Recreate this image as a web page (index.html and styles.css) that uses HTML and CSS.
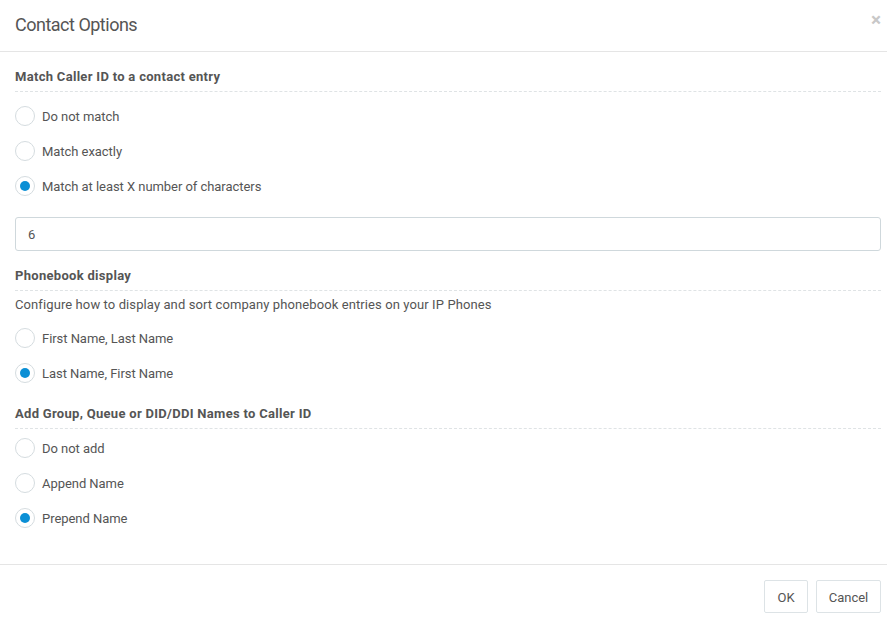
FILE: index.html
```html
<!DOCTYPE html>
<html>
<head>
<meta charset="utf-8">
<link rel="stylesheet" href="styles.css">
</head>
<body>
<div class="modal">
  <div class="modal-header">
    <h4 class="modal-title">Contact Options</h4>
    <span class="close">&times;</span>
  </div>
  <div class="modal-body">
    <div class="section sec-1">
      <div class="section-title">Match Caller ID to a contact entry</div>
      <div class="radios">
        <label class="radio"><span class="circle"></span><span class="text">Do not match</span></label>
        <label class="radio"><span class="circle"></span><span class="text">Match exactly</span></label>
        <label class="radio"><span class="circle checked"></span><span class="text">Match at least X number of characters</span></label>
      </div>
      <div class="input">6</div>
    </div>
    <div class="section sec-2">
      <div class="section-title">Phonebook display</div>
      <div class="desc">Configure how to display and sort company phonebook entries on your IP Phones</div>
      <div class="radios">
        <label class="radio"><span class="circle"></span><span class="text">First Name, Last Name</span></label>
        <label class="radio"><span class="circle checked"></span><span class="text">Last Name, First Name</span></label>
      </div>
    </div>
    <div class="section sec-3">
      <div class="section-title">Add Group, Queue or DID/DDI Names to Caller ID</div>
      <div class="radios">
        <label class="radio"><span class="circle"></span><span class="text">Do not add</span></label>
        <label class="radio"><span class="circle"></span><span class="text">Append Name</span></label>
        <label class="radio"><span class="circle checked"></span><span class="text">Prepend Name</span></label>
      </div>
    </div>
  </div>
  <div class="modal-footer">
    <button class="btn btn-ok">OK</button>
    <button class="btn btn-cancel">Cancel</button>
  </div>
</div>
</body>
</html>
```
FILE: styles.css
```css
html, body {
  margin: 0;
  padding: 0;
  background: #fff;
}
body {
  font-family: Roboto, "Liberation Sans", sans-serif;
  font-size: 13px;
  color: #555;
}
.modal {
  width: 887px;
}
.modal-header {
  position: relative;
  height: 51px;
  border-bottom: 1px solid #e5e5e5;
  padding: 0 6px 0 15px;
}
.modal-title {
  margin: 0;
  font-size: 18px;
  font-weight: 400;
  line-height: 50px;
  letter-spacing: -0.5px;
  color: #555;
}
.close {
  position: absolute;
  right: 6px;
  top: 10px;
  font-size: 19px;
  font-weight: 700;
  line-height: 20px;
  color: #c8c8c8;
}
.modal-body {
  padding: 14px 6px 0 15px;
}
.section-title {
  font-weight: 700;
  line-height: 20px;
  letter-spacing: 0.3px;
  padding-top: 1px;
  padding-bottom: 4px;
  border-bottom: 1px dashed #dfe3e5;
}
.radios {
  display: flex;
  flex-direction: column;
  gap: 15px;
}
.radio {
  display: flex;
  align-items: center;
  gap: 7px;
  height: 20px;
}
.radio .text {
  line-height: 20px;
  padding-top: 2px;
  letter-spacing: -0.05px;
}
.circle {
  width: 18px;
  height: 18px;
  border: 1px solid #d5dcdf;
  border-radius: 50%;
  display: flex;
  align-items: center;
  justify-content: center;
  flex: none;
}
.circle.checked::after {
  content: "";
  width: 10px;
  height: 10px;
  border-radius: 50%;
  background: #0b8fd5;
}
.sec-1 .radios {
  margin-top: 14px;
}
.input {
  margin-top: 21px;
  height: 32px;
  line-height: 34px;
  border: 1px solid #cfd8dc;
  border-radius: 3px;
  padding: 0 12px;
}
.sec-2 {
  margin-top: 14px;
}
.desc {
  margin-top: 3px;
  line-height: 20px;
  padding-top: 1px;
  letter-spacing: 0.1px;
}
.sec-2 .radios {
  margin-top: 13px;
}
.sec-3 {
  margin-top: 20px;
}
.sec-3 .radios {
  margin-top: 9px;
}
.modal-footer {
  margin-top: 36px;
  border-top: 1px solid #e5e5e5;
  padding: 15px 6px 0 15px;
  display: flex;
  justify-content: flex-end;
  gap: 8px;
}
.btn {
  font-family: inherit;
  font-size: 13px;
  color: #555;
  background: #fff;
  border: 1px solid #dde3e6;
  border-radius: 2px;
  height: 33px;
  padding: 2px 0 0;
  text-align: center;
}
.btn-ok {
  width: 44px;
}
.btn-cancel {
  width: 65px;
}
```
